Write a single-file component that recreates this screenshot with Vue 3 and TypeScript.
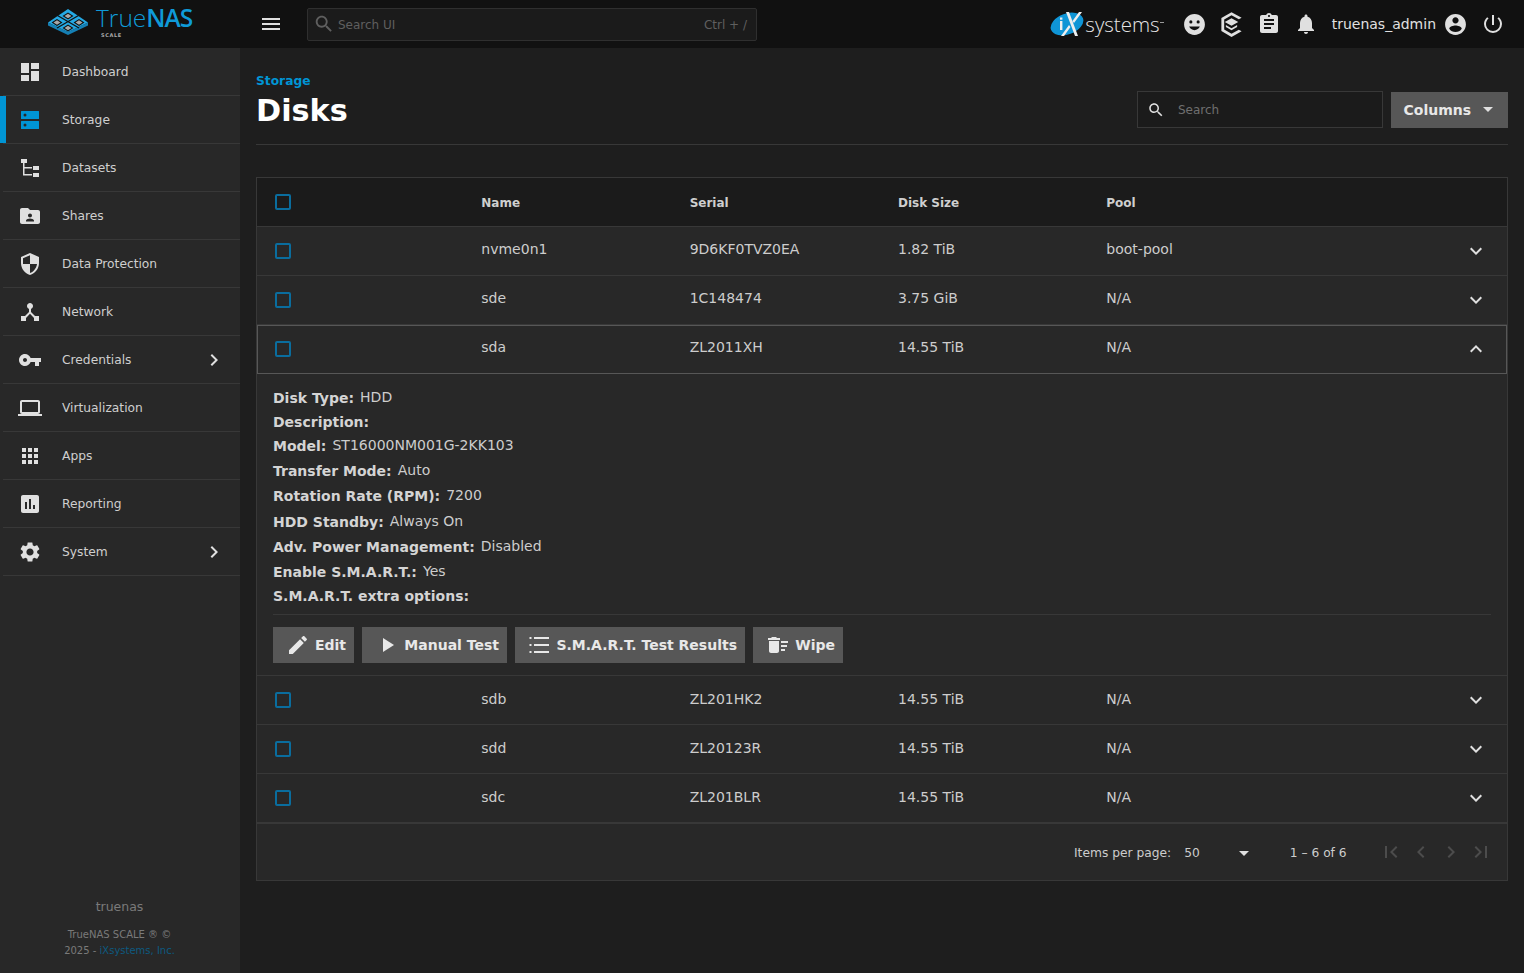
<script setup lang="ts">
interface NavItem {
  label: string
  icon: string
  arrow?: boolean
  active?: boolean
}

interface Disk {
  name: string
  serial: string
  size: string
  pool: string
  open?: boolean
}

const icons: Record<string, string> = {
  dashboard: 'M13 3v6h8V3zM13 21h8V11h-8zM3 21h8v-6H3zM3 13h8V3H3z',
  shares: 'M20 6h-8l-2-2H4c-1.1 0-1.99.9-1.99 2L2 18c0 1.1.9 2 2 2h16c1.1 0 2-.9 2-2V8c0-1.1-.9-2-2-2zm-8 3.5c1.1 0 2 .9 2 2s-.9 2-2 2-2-.9-2-2 .9-2 2-2zm4 8H8v-1c0-1.33 2.67-2 4-2s4 .67 4 2v1z',
  shield: 'M12 1L3 5v6c0 5.55 3.84 10.74 9 12 5.16-1.26 9-6.45 9-12V5l-9-4zm0 10.99h7c-.53 4.12-3.28 7.79-7 8.94V12H5V6.3l7-3.11v8.8z',
  network: 'M17 16l-4-4V8.82C14.16 8.4 15 7.3 15 6c0-1.66-1.34-3-3-3S9 4.34 9 6c0 1.3.84 2.4 2 2.82V12l-4 4H3v5h5v-3.05l4-4.2 4 4.2V21h5v-5h-4z',
  key: 'M12.65 10C11.83 7.67 9.61 6 7 6c-3.31 0-6 2.69-6 6s2.69 6 6 6c2.61 0 4.83-1.67 5.65-4H17v4h4v-4h2v-4H12.65zM7 14c-1.1 0-2-.9-2-2s.9-2 2-2 2 .9 2 2-.9 2-2 2z',
  laptop: 'M20 18c1.1 0 1.99-.9 1.99-2L22 6c0-1.1-.9-2-2-2H4c-1.1 0-2 .9-2 2v10c0 1.1.9 2 2 2H0v2h24v-2h-4zM4 6h16v10H4V6z',
  apps: 'M4 8h4V4H4v4zm6 12h4v-4h-4v4zm-6 0h4v-4H4v4zm0-6h4v-4H4v4zm6 0h4v-4h-4v4zm6-10v4h4V4h-4zm-6 4h4V4h-4v4zm6 6h4v-4h-4v4zm0 6h4v-4h-4v4z',
  report: 'M19 3H5c-1.1 0-2 .9-2 2v14c0 1.1.9 2 2 2h14c1.1 0 2-.9 2-2V5c0-1.1-.9-2-2-2zM9 17H7v-7h2v7zm4 0h-2V7h2v10zm4 0h-2v-4h2v4z',
  settings: 'M19.14 12.94c.04-.3.06-.61.06-.94 0-.32-.02-.64-.07-.94l2.03-1.58c.18-.14.23-.41.12-.61l-1.92-3.32c-.12-.22-.37-.29-.59-.22l-2.39.96c-.5-.38-1.03-.7-1.62-.94l-.36-2.54c-.04-.24-.24-.41-.48-.41h-3.84c-.24 0-.43.17-.47.41l-.36 2.54c-.59.24-1.13.57-1.62.94l-2.39-.96c-.22-.08-.47 0-.59.22L2.74 8.87c-.12.21-.08.47.12.61l2.03 1.58c-.05.3-.09.63-.09.94s.02.64.07.94l-2.03 1.58c-.18.14-.23.41-.12.61l1.92 3.32c.12.22.37.29.59.22l2.39-.96c.5.38 1.03.7 1.62.94l.36 2.54c.05.24.24.41.48.41h3.84c.24 0 .44-.17.47-.41l.36-2.54c.59-.24 1.13-.56 1.62-.94l2.39.96c.22.08.47 0 .59-.22l1.92-3.32c.12-.22.07-.47-.12-.61l-2.01-1.58zM12 15.6c-1.98 0-3.6-1.62-3.6-3.6s1.62-3.6 3.6-3.6 3.6 1.62 3.6 3.6-1.62 3.6-3.6 3.6z',
  storage: 'M3.500 3h17a.5.5 0 0 1 .5.5v7a.5.5 0 0 1-.5.5h-17a.5.5 0 0 1-.5-.5v-7a.5.5 0 0 1 .5-.5zM7 8.500a1.500 1.500 0 1 0 0-3 1.500 1.500 0 0 0 0 3zM3.500 13h17a.5.5 0 0 1 .5.5v7a.5.5 0 0 1-.5.5h-17a.5.5 0 0 1-.5-.5v-7a.5.5 0 0 1 .5-.5zM7 18.500a1.500 1.500 0 1 0 0-3 1.500 1.500 0 0 0 0 3z',
  datasets: 'M3 3h6v4H3zM5 7h1.500v4H14v1.500H6.500V18H14v1.500H5zM15 10h6v4h-6zM15 17h6v4h-6z',
  menu: 'M3 18h18v-2H3v2zm0-5h18v-2H3v2zm0-7v2h18V6H3z',
  search: 'M15.5 14h-.79l-.28-.27C15.41 12.59 16 11.11 16 9.5 16 5.91 13.09 3 9.5 3S3 5.91 3 9.5 5.91 16 9.5 16c1.61 0 3.09-.59 4.23-1.57l.27.28v.79l5 4.99L20.49 19l-4.99-5zm-6 0C7.01 14 5 11.99 5 9.5S7.01 5 9.5 5 14 7.01 14 9.5 11.99 14 9.5 14z',
  clipboard: 'M19 3h-4.18C14.4 1.84 13.3 1 12 1c-1.3 0-2.4.84-2.82 2H5c-1.1 0-2 .9-2 2v14c0 1.1.9 2 2 2h14c1.1 0 2-.9 2-2V5c0-1.1-.9-2-2-2zm-7 0c.55 0 1 .45 1 1s-.45 1-1 1-1-.45-1-1 .45-1 1-1zm2 14H7v-2h7v2zm3-4H7v-2h10v2zm0-4H7V7h10v2z',
  bell: 'M12 22c1.1 0 2-.9 2-2h-4c0 1.1.89 2 2 2zm6-6v-5c0-3.07-1.64-5.64-4.5-6.32V4c0-.83-.67-1.5-1.5-1.5s-1.5.67-1.5 1.5v.68C7.63 5.36 6 7.92 6 11v5l-2 2v1h16v-1l-2-2z',
  account: 'M12 2C6.48 2 2 6.48 2 12s4.48 10 10 10 10-4.48 10-10S17.52 2 12 2zm0 3c1.66 0 3 1.34 3 3s-1.34 3-3 3-3-1.34-3-3 1.34-3 3-3zm0 14.2c-2.5 0-4.71-1.28-6-3.22.03-1.99 4-3.08 6-3.08 1.99 0 5.97 1.09 6 3.08-1.29 1.94-3.5 3.22-6 3.22z',
  power: 'M13 3h-2v10h2V3zM17.83 5.17l-1.42 1.42C18.05 7.91 19 9.9 19 12a7 7 0 0 1-7 7c-3.86 0-7-3.12-7-7 0-2.14.95-4.12 2.58-5.42L6.17 5.17C4.23 6.82 3.08 9.25 3 12a9 9 0 0 0 18 0c0-2.73-1.23-5.18-3.17-6.83z',
  face: 'M12 2C6.47 2 2 6.47 2 12s4.47 10 10 10 10-4.47 10-10S17.53 2 12 2zM8.5 8a1.5 1.5 0 1 1 0 3 1.5 1.5 0 0 1 0-3zm7 0a1.5 1.5 0 1 1 0 3 1.5 1.5 0 0 1 0-3zM12 17.5c-2.33 0-4.31-1.46-5.11-3.5h10.22c-.81 2.04-2.78 3.5-5.11 3.5z',
  edit: 'M3 17.25V21h3.75L17.81 9.94l-3.75-3.75L3 17.25zM20.71 7.04c.39-.39.39-1.02 0-1.41l-2.34-2.34c-.39-.39-1.02-.39-1.41 0l-1.83 1.83 3.75 3.75 1.83-1.83z',
  play: 'M8 5v14l11-7z',
  list: 'M2.500 13h2v-2h-2v2zm0 7h2v-2h-2v2zm0-14h2V4h-2v2zm4.500 7h15v-2H7v2zm0 7h15v-2H7v2zM7 4v2h15V4H7z',
  wipe: 'M15 16h4v2h-4zm0-8h7v2h-7zm0 4h6v2h-6zM3 18c0 1.1.9 2 2 2h6c1.1 0 2-.9 2-2V8H3v10zM14 5h-3l-1-1H6L5 5H2v2h12z',
  down: 'M16.59 8.59L12 13.17 7.41 8.59 6 10l6 6 6-6z',
  up: 'M12 8l-6 6 1.41 1.41L12 10.83l4.59 4.58L18 14z',
  right: 'M8.59 16.59L13.17 12 8.59 7.41 10 6l6 6-6 6z',
  first: 'M18.41 16.59L13.82 12l4.59-4.59L17 6l-6 6 6 6zM6 6h2v12H6z',
  prev: 'M15.41 7.41L14 6l-6 6 6 6 1.41-1.41L10.83 12z',
  next: 'M10 6L8.59 7.41 13.17 12l-4.58 4.59L10 18l6-6z',
  last: 'M5.59 7.41L10.18 12l-4.59 4.59L7 18l6-6-6-6zM16 6h2v12h-2z',
}

const navItems: NavItem[] = [
  { label: 'Dashboard', icon: 'dashboard' },
  { label: 'Storage', icon: 'storage', active: true },
  { label: 'Datasets', icon: 'datasets' },
  { label: 'Shares', icon: 'shares' },
  { label: 'Data Protection', icon: 'shield' },
  { label: 'Network', icon: 'network' },
  { label: 'Credentials', icon: 'key', arrow: true },
  { label: 'Virtualization', icon: 'laptop' },
  { label: 'Apps', icon: 'apps' },
  { label: 'Reporting', icon: 'report' },
  { label: 'System', icon: 'settings', arrow: true },
]

const disks: Disk[] = [
  { name: 'nvme0n1', serial: '9D6KF0TVZ0EA', size: '1.82 TiB', pool: 'boot-pool' },
  { name: 'sde', serial: '1C148474', size: '3.75 GiB', pool: 'N/A' },
  { name: 'sda', serial: 'ZL2011XH', size: '14.55 TiB', pool: 'N/A', open: true },
  { name: 'sdb', serial: 'ZL201HK2', size: '14.55 TiB', pool: 'N/A' },
  { name: 'sdd', serial: 'ZL20123R', size: '14.55 TiB', pool: 'N/A' },
  { name: 'sdc', serial: 'ZL201BLR', size: '14.55 TiB', pool: 'N/A' },
]

const details = [
  ['Disk Type:', 'HDD'],
  ['Description:', ''],
  ['Model:', 'ST16000NM001G-2KK103'],
  ['Transfer Mode:', 'Auto'],
  ['Rotation Rate (RPM):', '7200'],
  ['HDD Standby:', 'Always On'],
  ['Adv. Power Management:', 'Disabled'],
  ['Enable S.M.A.R.T.:', 'Yes'],
  ['S.M.A.R.T. extra options:', ''],
]

const actions = [
  { label: 'Edit', icon: 'edit', cls: 'act-edit' },
  { label: 'Manual Test', icon: 'play', cls: 'act-test' },
  { label: 'S.M.A.R.T. Test Results', icon: 'list', cls: 'act-smart' },
  { label: 'Wipe', icon: 'wipe', cls: 'act-wipe' },
]
</script>

<template>
  <div class="page">
    <header class="topbar">
      <div class="brand">
        <svg class="brand-mark" viewBox="0 0 40 26" width="40" height="26">
          <path d="M0 13.500v3L20 26l20-9.500v-3L20 23z" fill="#1580b5" />
          <path d="M20 0l20 13.500L20 23 0 13.500z" fill="#25a9e4" />
          <path d="M9.500 6.500L31 19M30.500 6.500L9 19" stroke="#111" stroke-width="1.300" fill="none" />
          <path d="M20 3.500l5.500 3.500-5.500 3.500L14.500 7zM9 10l5.500 3.500L9 17l-5.500-3.500zM31 10l5.500 3.500L31 17l-5.500-3.500zM20 15.500l5.500 3.500-5.500 3.500-5.500-3.500z" fill="#111" />
          <path d="M20 4.700l3.500 2.300-3.500 2.300L16.500 7zM9 11.200l3.500 2.300L9 15.800l-3.500-2.300zM31 11.200l3.500 2.300-3.500 2.300-3.500-2.300zM20 16.700l3.500 2.300-3.500 2.300-3.500-2.300z" fill="#a8a8a8" />
        </svg>
        <div class="brand-text">
          <div class="brand-name"><span class="thin">True</span><span class="bold">NAS</span></div>
          <div class="brand-scale">SCALE</div>
        </div>
      </div>
      <svg class="menu-ico" viewBox="0 0 24 24" width="24" height="24"><path :d="icons.menu" /></svg>
      <div class="global-search">
        <svg viewBox="0 0 24 24" width="22" height="22"><path :d="icons.search" /></svg>
        <span class="gs-text">Search UI</span>
        <span class="gs-hint">Ctrl + /</span>
      </div>
      <div class="top-right">
        <div class="ix-logo">
          <svg viewBox="0 0 34 26" width="34" height="26">
            <ellipse cx="17" cy="13" rx="17" ry="10.500" transform="rotate(-20 17 13)" fill="#0f95d6" />
            <path d="M19 1l9 24h-3L16 1zM29 1h3l-8 11-1.500-2zM14 25h-3l8-11 1.500 2z" fill="#eeeeee" />
            <rect x="10" y="10" width="2.400" height="9" fill="#eeeeee" />
            <rect x="10" y="6.500" width="2.400" height="2.200" fill="#eeeeee" />
          </svg>
          <span class="ix-text">systems</span>
        </div>
        <svg class="top-ico face" viewBox="0 0 24 24" width="25" height="25"><path :d="icons.face" fill-rule="evenodd" /></svg>
        <svg class="top-ico tc" viewBox="0 0 24 24" width="27" height="27">
          <path d="M12 1l9 5-2.500 1.400L12 3.800 5.500 7.500v9l6.500 3.700 6.500-3.600L21 18l-9 5-9-5.200V6.200z" />
          <path d="M12 6.500l6 3.300-6 3.300-6-3.300zM7 12.500l5 2.800 5-2.800v1.800l-5 2.800-5-2.800z" />
        </svg>
        <svg class="top-ico clip" viewBox="0 0 24 24" width="24" height="24"><path :d="icons.clipboard" /></svg>
        <svg class="top-ico bell" viewBox="0 0 24 24" width="24" height="24"><path :d="icons.bell" /></svg>
        <span class="username">truenas_admin</span>
        <svg class="top-ico" viewBox="0 0 24 24" width="25" height="25"><path :d="icons.account" /></svg>
        <svg class="top-ico power" viewBox="0 0 24 24" width="24" height="24"><path :d="icons.power" /></svg>
      </div>
    </header>

    <div class="body-row">
      <aside class="sidebar">
        <nav>
          <a v-for="item in navItems" :key="item.label" class="nav-item" :class="{ active: item.active }">
            <svg class="nav-ico" viewBox="0 0 24 24" width="24" height="24"><path :d="icons[item.icon]" fill-rule="evenodd" /></svg>
            <span class="nav-label">{{ item.label }}</span>
            <svg v-if="item.arrow" class="nav-arrow" viewBox="0 0 24 24" width="24" height="24"><path :d="icons.right" /></svg>
          </a>
        </nav>
        <div class="side-foot">
          <div class="host">truenas</div>
          <div class="copy">TrueNAS SCALE ® ©<br />2025 - <span class="ix-link">iXsystems, Inc.</span></div>
        </div>
      </aside>

      <main class="content">
        <div class="page-head">
          <div>
            <div class="crumb">Storage</div>
            <h1>Disks</h1>
          </div>
          <div class="head-actions">
            <div class="table-search">
              <svg viewBox="0 0 24 24" width="18" height="18"><path :d="icons.search" /></svg>
              <span>Search</span>
            </div>
            <button class="columns-btn">Columns<i class="caret"></i></button>
          </div>
        </div>

        <section class="table">
          <div class="row head-row">
            <div class="cell"><span class="check"></span></div>
            <div class="cell">Name</div>
            <div class="cell">Serial</div>
            <div class="cell">Disk Size</div>
            <div class="cell">Pool</div>
            <div class="cell"></div>
          </div>
          <template v-for="(disk, i) in disks" :key="disk.name">
            <div class="row" :class="{ opened: disk.open, upper: i < 3 }">
              <div class="cell"><span class="check"></span></div>
              <div class="cell val">{{ disk.name }}</div>
              <div class="cell val">{{ disk.serial }}</div>
              <div class="cell val">{{ disk.size }}</div>
              <div class="cell val">{{ disk.pool }}</div>
              <div class="cell toggle">
                <svg viewBox="0 0 24 24" width="24" height="24"><path :d="disk.open ? icons.up : icons.down" /></svg>
              </div>
            </div>
            <div v-if="disk.open" class="detail">
              <div class="detail-list">
                <div v-for="d in details" :key="d[0]" class="detail-line" :class="{ empty: !d[1] }">
                  <b>{{ d[0] }}</b><span>{{ d[1] }}</span>
                </div>
              </div>
              <div class="detail-actions">
                <button v-for="a in actions" :key="a.label" class="act" :class="a.cls">
                  <svg viewBox="0 0 24 24" width="24" height="24"><path :d="icons[a.icon]" /></svg>
                  {{ a.label }}
                </button>
              </div>
            </div>
          </template>
          <div class="pager">
            <span class="pp-label">Items per page:</span>
            <span class="pp-value">50</span>
            <i class="caret pp-caret"></i>
            <span class="pp-range">1 – 6 of 6</span>
            <div class="pp-nav">
              <svg viewBox="0 0 24 24" width="24" height="24"><path :d="icons.first" /></svg>
              <svg viewBox="0 0 24 24" width="24" height="24"><path :d="icons.prev" /></svg>
              <svg viewBox="0 0 24 24" width="24" height="24"><path :d="icons.next" /></svg>
              <svg viewBox="0 0 24 24" width="24" height="24"><path :d="icons.last" /></svg>
            </div>
          </div>
        </section>
      </main>
    </div>
  </div>
</template>

<style>
html,
body {
  margin: 0;
  background: #1e1e1e;
}
</style>

<style scoped>
.page {
  width: 1524px;
  height: 973px;
  overflow: hidden;
  display: flex;
  flex-direction: column;
  font-family: "DejaVu Sans", sans-serif;
  color: #e0e0e0;
  background: #1e1e1e;
}
.topbar {
  height: 48px;
  flex: none;
  display: flex;
  align-items: center;
  background: #111111;
}
.brand {
  width: 240px;
  display: flex;
  align-items: center;
  padding-left: 48px;
  box-sizing: border-box;
  gap: 8px;
}
.brand-mark {
  margin-top: -4px;
}
.brand-text {
  position: relative;
  height: 34px;
}
.brand-name {
  font-family: "Open Sans", sans-serif;
  font-size: 24.500px;
  line-height: 28px;
  color: #0f9ad8;
  margin-top: -3px;
  white-space: nowrap;
}
.thin {
  font-weight: 300;
}
.bold {
  font-weight: 600;
  letter-spacing: -1px;
}
.brand-scale {
  font-size: 5px;
  letter-spacing: 0.6px;
  line-height: 6px;
  color: #aaaaaa;
  margin: 0 0 0 5px;
  font-weight: 700;
}
.menu-ico {
  fill: #e0e0e0;
  margin: 0 24px 0 19px;
}
.global-search {
  width: 450px;
  height: 33px;
  box-sizing: border-box;
  display: flex;
  align-items: center;
  border: 1px solid #2f2f2f;
  border-radius: 2px;
  background: #1b1b1b;
  padding: 0 9px 0 5px;
  font-size: 12px;
  color: #5f5f5f;
}
.global-search svg {
  fill: #5f5f5f;
}
.gs-text,
.gs-hint {
  padding-top: 2px;
}
.gs-text {
  margin-left: 3px;
}
.gs-hint {
  margin-left: auto;
}
.top-right {
  margin-left: auto;
  display: flex;
  align-items: center;
  padding-right: 19px;
}
.ix-logo {
  display: flex;
  align-items: center;
  margin-right: 18.500px;
  position: relative;
}
.ix-logo::after {
  content: "";
  position: absolute;
  right: 0;
  top: 12px;
  width: 4px;
  height: 1px;
  background: #9a9a9a;
}
.ix-text {
  font-family: "Open Sans", sans-serif;
  font-weight: 300;
  font-size: 20.500px;
  color: #e6e6e6;
  margin-left: 1px;
  padding-right: 4px;
}
.top-ico {
  fill: #e0e0e0;
  flex: none;
}
.tc {
  margin: 0 -1px 0 10.500px;
}
.clip {
  margin-left: 13px;
}
.bell {
  margin-left: 13px;
}
.power {
  margin-left: 13.500px;
}
.username {
  font-size: 14px;
  margin: 0 6.500px 0 14px;
  color: #e0e0e0;
}
.body-row {
  flex: 1;
  display: flex;
  min-height: 0;
}
.sidebar {
  width: 240px;
  flex: none;
  display: flex;
  flex-direction: column;
  background: #282828;
}
.nav-item {
  height: 48px;
  box-sizing: border-box;
  display: flex;
  align-items: center;
  padding-left: 18px;
  margin-left: 3px;
  border-bottom: 1px solid #383838;
  font-size: 12.250px;
  color: #cfcfcf;
  position: relative;
}
.nav-item.active::before {
  content: "";
  position: absolute;
  left: -3px;
  top: 0;
  bottom: 0;
  width: 6px;
  background: #0095d5;
}
.nav-ico {
  fill: #e0e0e0;
  flex: none;
  margin-left: -3px;
  width: 24px;
}
.nav-item.active .nav-ico {
  fill: #0095d5;
}
.nav-label {
  margin-left: 20px;
}
.nav-arrow {
  fill: #e0e0e0;
  margin-left: auto;
  margin-right: 14px;
}
.side-foot {
  margin-top: auto;
  text-align: center;
  color: #7a7a7a;
  padding: 0 1px 14px 0;
}
.host {
  font-size: 12.500px;
  margin-bottom: 13px;
}
.copy {
  font-size: 10px;
  line-height: 16px;
}
.ix-link {
  color: #0d5a80;
}
.content {
  flex: 1;
  min-width: 0;
  padding: 0 16px;
}
.page-head {
  height: 97px;
  box-sizing: border-box;
  display: flex;
  justify-content: space-between;
  align-items: flex-start;
  border-bottom: 1px solid #383838;
  margin-bottom: 32px;
  padding-top: 25px;
}
.crumb {
  font-size: 12.250px;
  font-weight: 700;
  color: #0095d5;
  line-height: 16px;
}
h1 {
  margin: 3px 0 0;
  font-size: 30.300px;
  line-height: 38px;
  font-weight: 700;
  color: #ffffff;
}
.head-actions {
  display: flex;
  align-items: center;
  gap: 8px;
  margin-top: 18px;
}
.table-search {
  width: 246px;
  height: 37px;
  box-sizing: border-box;
  display: flex;
  align-items: center;
  gap: 13px;
  padding-left: 9px;
  border: 1px solid #383838;
  background: #1b1b1b;
  font-size: 12px;
  color: #6f6f6f;
}
.table-search svg {
  fill: #e0e0e0;
}
.columns-btn {
  width: 117px;
  height: 36px;
  display: flex;
  align-items: center;
  justify-content: space-between;
  padding: 0 15px 0 12.500px;
  border: 0;
  background: #575757;
  color: #e8e8e8;
  font: 700 14px "DejaVu Sans", sans-serif;
}
.caret {
  width: 0;
  height: 0;
  border-left: 5px solid transparent;
  border-right: 5px solid transparent;
  border-top: 5px solid #e0e0e0;
}
.table {
  border: 1px solid #383838;
  background: #282828;
}
.row {
  height: 49px;
  box-sizing: border-box;
  display: grid;
  grid-template-columns: repeat(6, 1fr);
  border-bottom: 1px solid #383838;
}
.head-row {
  background: #1b1b1b;
  font-size: 12px;
  font-weight: 700;
  color: #cfcfcf;
}
.cell {
  display: flex;
  align-items: center;
  padding-left: 16px;
  padding-top: 1px;
}
.val {
  font-size: 14px;
  color: #cdcdcd;
  padding-top: 0;
  padding-bottom: 3px;
}
.upper .val {
  padding-bottom: 5px;
}
.check {
  width: 16px;
  height: 16px;
  margin-left: 2px;
  margin-top: -1px;
  box-sizing: border-box;
  border: 2px solid #0a6d9e;
  border-radius: 2px;
}
.row.opened {
  outline: 1px solid #575757;
  outline-offset: -1px;
}
.toggle {
  justify-content: flex-end;
  padding: 0 19px 1px 0;
}
.toggle svg {
  fill: #e0e0e0;
}
.detail {
  height: 302px;
  box-sizing: border-box;
  padding: 11px 16px 0;
  border-bottom: 1px solid #383838;
}
.detail-list {
  height: 230px;
  box-sizing: border-box;
  border-bottom: 1px solid #383838;
}
.detail-line {
  height: 25.300px;
  display: flex;
  align-items: center;
  gap: 6px;
  font-size: 14px;
  color: #cdcdcd;
}
.detail-line.empty {
  height: 22.800px;
}
.detail-line b {
  color: #d4d4d4;
  font-weight: 700;
}
.detail-line span {
  position: relative;
  top: -1px;
}
.detail-actions {
  display: flex;
  gap: 8px;
  margin-top: 12px;
}
.act {
  height: 36px;
  display: flex;
  align-items: center;
  justify-content: flex-end;
  gap: 5px;
  padding: 0 8px;
  border: 0;
  background: #575757;
  color: #e8e8e8;
  font: 700 14px "DejaVu Sans", sans-serif;
}
.act svg {
  fill: #e8e8e8;
  flex: none;
}
.act-edit {
  width: 81px;
}
.act-test {
  width: 145px;
}
.act-smart {
  width: 230px;
}
.act-wipe {
  width: 90px;
}
.pager {
  height: 57px;
  box-sizing: border-box;
  display: flex;
  align-items: center;
  padding: 2px 14px 0 817px;
  border-top: 1px solid #383838;
  font-size: 12.250px;
  color: #cdcdcd;
}
.pp-value {
  margin-left: 13px;
}
.pp-caret {
  margin-left: 39px;
}
.pp-range {
  margin-left: 41px;
}
.pp-nav {
  margin-left: auto;
  display: flex;
  gap: 6px;
  margin-top: -3px;
}
.pp-nav svg {
  fill: #4c4c4c;
}
</style>
